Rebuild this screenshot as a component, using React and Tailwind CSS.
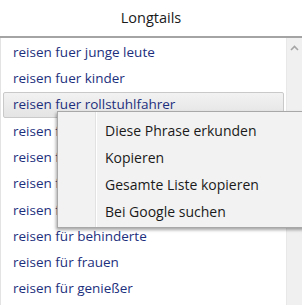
import React from "react";

const rows = [
  "reisen fuer junge leute",
  "reisen fuer kinder",
  "reisen fuer rollstuhlfahrer",
  "reisen fuer senioren",
  "reisen fuer singles",
  "reisen fuer studenten",
  "reisen fuer zwei",
  "reisen für behinderte",
  "reisen für frauen",
  "reisen für genießer",
];

const menuItems = [
  "Diese Phrase erkunden",
  "Kopieren",
  "Gesamte Liste kopieren",
  "Bei Google suchen",
];

export default function App() {
  return (
    <div className="relative w-[302px] h-[305px] overflow-hidden bg-white font-['Open_Sans',sans-serif]">
      <div className="h-[36px] flex items-center justify-center text-[14.5px] text-[#1a1a1a]">
        Longtails
      </div>
      <div className="flex h-[269px] border-t-2 border-[#a4a4a4]">
        <div className="flex-1 border-l border-[#e3e3e3] pt-[1px]">
          {rows.map((r, i) => {
            // rows 3..6 sit under the context menu: only the start shows
            const hidden = i >= 3 && i <= 6;
            if (i === 2) {
              return (
                <div
                  key={i}
                  className="h-[26px] mx-[2px] pl-[9px] flex items-center rounded-[2px] border border-[#c9c9c9] bg-gradient-to-b from-[#f2f2f2] to-[#e4e4e4] text-[13.5px] text-[#1c2f7d]"
                >
                  {r}
                </div>
              );
            }
            return (
              <div
                key={i}
                className="h-[26.3px] pl-[12px] flex items-center text-[13.5px] text-[#1c2f7d]"
              >
                {hidden ? (
                  <span className="block w-[44px] overflow-hidden whitespace-nowrap">{r}</span>
                ) : (
                  r
                )}
              </div>
            );
          })}
        </div>
        <div className="w-[16px] bg-[#f0f0f0] border-l border-[#e8e8e8] flex justify-center pt-[7px]">
          <svg width="9" height="6" viewBox="0 0 9 6">
            <path d="M1 5 L4.5 1.5 L8 5" fill="none" stroke="#a6a6a6" strokeWidth="1.6" />
          </svg>
        </div>
      </div>

      <div className="absolute left-[57px] top-[111px] w-[260px] h-[117px] bg-[#f2f2f2] border border-[#a8a8a8] shadow-[-1px_2px_3px_rgba(0,0,0,0.35)] flex">
        <div className="w-[38px] border-r border-[#e2e2e2]" />
        <div className="w-px bg-white" />
        <div className="flex-1 pt-[5px]">
          {menuItems.map((m) => (
            <div key={m} className="h-[27px] pl-[8px] flex items-center text-[14px] text-[#1a1a1a]">
              {m}
            </div>
          ))}
        </div>
      </div>
    </div>
  );
}
